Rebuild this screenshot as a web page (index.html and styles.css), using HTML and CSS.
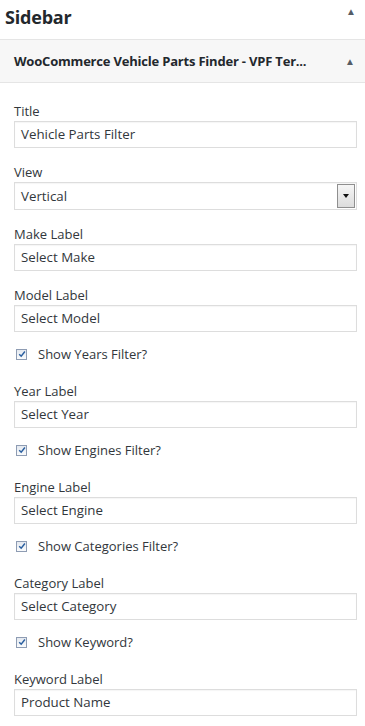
FILE: index.html
```html
<!DOCTYPE html>
<html lang="en">
<head>
  <meta charset="UTF-8" />
  <meta name="viewport" content="width=device-width, initial-scale=1.0" />
  <title>Sidebar Widget</title>
  <link rel="stylesheet" href="styles.css">
</head>
<body>
  <div class="sidebar-head">
    <h2>Sidebar</h2>
    <span class="toggle top">&#9650;</span>
  </div>

  <div class="widget">
    <div class="widget-top">
      <h3>WooCommerce Vehicle Parts Finder - VPF Ter...</h3>
      <span class="toggle">&#9650;</span>
    </div>

    <div class="widget-inside">
      <div class="field">
        <label>Title</label>
        <div class="input">Vehicle Parts Filter</div>
      </div>

      <div class="field">
        <label>View</label>
        <div class="select">
          <span>Vertical</span>
          <span class="select-btn"><i></i></span>
        </div>
      </div>

      <div class="field">
        <label>Make Label</label>
        <div class="input">Select Make</div>
      </div>

      <div class="field">
        <label>Model Label</label>
        <div class="input">Select Model</div>
      </div>

      <div class="check-row">
        <span class="check"><svg viewBox="0 0 10 10" width="8" height="8"><path d="M1.5 5.2 L4 7.8 L8.6 1.8" fill="none" stroke="#2a5fa0" stroke-width="1.8"/></svg></span>
        Show Years Filter?
      </div>

      <div class="field">
        <label>Year Label</label>
        <div class="input">Select Year</div>
      </div>

      <div class="check-row">
        <span class="check"><svg viewBox="0 0 10 10" width="8" height="8"><path d="M1.5 5.2 L4 7.8 L8.6 1.8" fill="none" stroke="#2a5fa0" stroke-width="1.8"/></svg></span>
        Show Engines Filter?
      </div>

      <div class="field">
        <label>Engine Label</label>
        <div class="input">Select Engine</div>
      </div>

      <div class="check-row">
        <span class="check"><svg viewBox="0 0 10 10" width="8" height="8"><path d="M1.5 5.2 L4 7.8 L8.6 1.8" fill="none" stroke="#2a5fa0" stroke-width="1.8"/></svg></span>
        Show Categories Filter?
      </div>

      <div class="field">
        <label>Category Label</label>
        <div class="input">Select Category</div>
      </div>

      <div class="check-row">
        <span class="check"><svg viewBox="0 0 10 10" width="8" height="8"><path d="M1.5 5.2 L4 7.8 L8.6 1.8" fill="none" stroke="#2a5fa0" stroke-width="1.8"/></svg></span>
        Show Keyword?
      </div>

      <div class="field">
        <label>Keyword Label</label>
        <div class="input">Product Name</div>
      </div>
    </div>
  </div>
</body>
</html>
```

FILE: styles.css
```css
:root {
  --text-color: #32373c;
  --border-light: #e5e5e5;
  --input-border: #dddddd;
}
body {
  margin: 0;
  background: #fff;
  color: var(--text-color);
  font-family: "Open Sans", "Noto Sans", sans-serif;
  font-size: 13px;
}
.sidebar-head {
  display: flex;
  align-items: center;
  justify-content: space-between;
  height: 39px;
  padding: 0 9px 0 5px;
  border-bottom: 1px solid var(--border-light);
}
.sidebar-head h2 {
  margin: 0 0 6px;
  font-size: 18px;
  font-weight: 700;
  letter-spacing: -0.2px;
  color: #23282d;
}
.toggle {
  font-size: 10px;
  color: #555d66;
}
.toggle.top {
  align-self: flex-start;
  margin-top: 4px;
}
.widget-top {
  display: flex;
  align-items: center;
  justify-content: space-between;
  height: 42px;
  padding: 0 10px 0 14px;
  background: #f7f7f7;
  border-bottom: 1px solid var(--border-light);
}
.widget-top h3 {
  margin: 0;
  font-size: 13px;
  font-weight: 700;
  letter-spacing: -0.2px;
  color: #23282d;
}
.widget-inside {
  padding: 17px 8px 10px 14px;
}
.field {
  margin-bottom: 13px;
}
.field label {
  display: block;
  line-height: 18px;
  padding-top: 2px;
  margin-bottom: 1px;
}
.input,
.select {
  box-sizing: border-box;
  height: 27px;
  border: 1px solid var(--input-border);
  padding: 0 6px;
  font-size: 13.3px;
  line-height: 25px;
  color: #32373c;
  box-shadow: inset 0 1px 1px rgba(0, 0, 0, 0.04);
}
.select {
  display: flex;
  align-items: center;
  justify-content: space-between;
  height: 28px;
  padding-right: 1px;
}
.select-btn {
  box-sizing: border-box;
  display: flex;
  align-items: center;
  justify-content: center;
  width: 18px;
  height: 24px;
  border: 1px solid #8f8f8f;
  background: linear-gradient(#f6f6f6, #dcdcdc);
}
.select-btn i {
  width: 0;
  height: 0;
  border-left: 3px solid transparent;
  border-right: 3px solid transparent;
  border-top: 4px solid #111;
}
.check-row {
  display: flex;
  align-items: center;
  gap: 11px;
  height: 18px;
  padding-left: 2px;
  margin-bottom: 17px;
}
.check {
  box-sizing: border-box;
  display: flex;
  align-items: center;
  justify-content: center;
  width: 11px;
  height: 11px;
  border: 1px solid #8e9cb3;
  background: linear-gradient(#e4e9f0, #fafbfc);
}
```
